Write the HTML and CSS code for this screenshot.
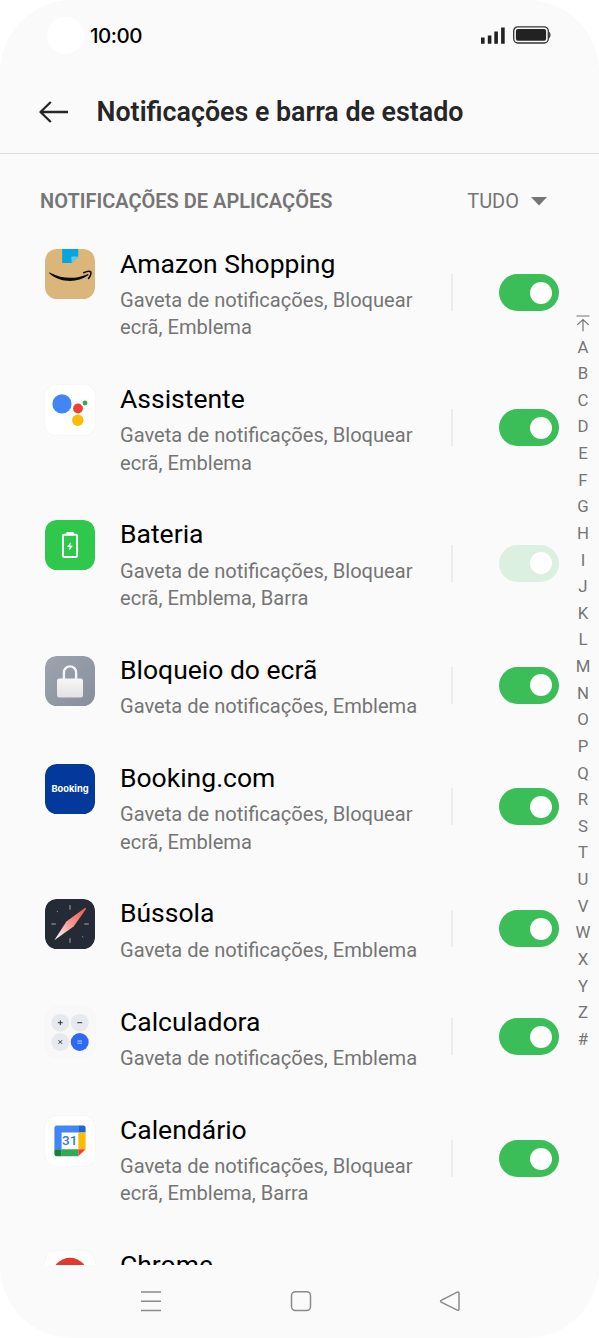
FILE: index.html
```
<!DOCTYPE html>
<html lang="pt">
<head>
    <meta charset="UTF-8">
    <meta name="viewport" content="width=device-width, initial-scale=1.0">
    <title>Notificações e barra de estado</title>

    <link rel="stylesheet" href="styles.css">
</head>

<body>

<div class="screen">
    <div class="status-bar">
        <div class="camera"></div>
        <span class="time">10:00</span>
        <svg class="signal" width="24" height="17" viewBox="0 0 24 17">
            <path d="M0 10.5h3.6v6.3H0zM6.8 8.5h3.6v8.3H6.8zM13.3 4.6h3.6v12.2h-3.6zM20.1.4h3.6v16.4h-3.6z" fill="#222"/>
        </svg>
        <svg class="battery" width="38" height="18" viewBox="0 0 38 18">
            <rect x=".7" y=".8" width="34.6" height="16.2" rx="4.2" fill="none" stroke="#333" stroke-width="1.3"/>
            <rect x="2.9" y="3" width="30.2" height="11.8" rx="2" fill="#222"/>
            <path d="M36.2 5.8c1.7.6 1.7 5.8 0 6.4z" fill="#222"/>
        </svg>
    </div>

    <header class="header">
        <svg class="back" width="30" height="22" viewBox="0 0 30 22">
            <path d="M29 11H1.5M11.800 1L1.500 11l10.300 10" fill="none" stroke="#262626" stroke-width="2.3" stroke-linejoin="round"/>
        </svg>
        <h1>Notificações e barra de estado</h1>
    </header>

    <div class="section-title">
        <h2>NOTIFICAÇÕES DE APLICAÇÕES</h2>
        <span class="filter">TUDO</span>
        <svg width="16" height="9" viewBox="0 0 16 9"><path d="M0 0h16L8 8.6z" fill="#757575"/></svg>
    </div>

    <div class="list">
        <div class="row">
            <svg class="icon" viewBox="0 0 50 50">
                <rect width="50" height="50" rx="11.5" fill="#dab67a"/>
                <path d="M17.2 0h16v7.5l-6.5 6.5h-9.5z" fill="#08a5dc"/>
                <path d="M33.2 7.5h-6.3q-.8 0-.7.8l.5 5.7z" fill="#5fc9ee"/>
                <path d="M4.500 24.600c-.7-.6-.2-1.300.6-.9 12.600 6.500 25.400 6.700 37.300 1.500 1.100-.4 1.600.7.600 1.400-10.500 7.700-28.500 7.300-38.500-2z" fill="#0b0b0b"/>
                <path d="M38.600 23.800c2.800-1.200 6.300-1.700 7.200-.9.700 1-.3 4.300-2.300 6.600" fill="none" stroke="#0b0b0b" stroke-width="1.500" stroke-linecap="round"/>
            </svg>
            <div class="text">
                <div class="name">Amazon Shopping</div>
                <div class="detail">Gaveta de notificações, Bloquear ecrã, Emblema</div>
            </div>
            <div class="toggle"></div>
        </div>

        <div class="row">
            <svg class="icon light" viewBox="0 0 50 50">
                <rect width="50" height="50" rx="11.5" fill="#fff"/>
                <circle cx="17" cy="18.900" r="9.600" fill="#4285f4"/>
                <circle cx="33" cy="23.500" r="4.900" fill="#ea4335"/>
                <circle cx="32.800" cy="35.300" r="5.700" fill="#fbbc04"/>
                <circle cx="40" cy="18" r="2.400" fill="#34a853"/>
            </svg>
            <div class="text">
                <div class="name">Assistente</div>
                <div class="detail">Gaveta de notificações, Bloquear ecrã, Emblema</div>
            </div>
            <div class="toggle"></div>
        </div>

        <div class="row">
            <svg class="icon" viewBox="0 0 50 50">
                <rect width="50" height="50" rx="11.5" fill="#2fc84d"/>
                <rect x="17.900" y="14.800" width="14.200" height="22.200" rx="1.300" fill="none" stroke="#fff" stroke-width="1.900"/>
                <path d="M21.200 14.500v-1.200q0-1.300 1.300-1.300h5q1.300 0 1.300 1.300v1.200z" fill="#fff"/>
                <path d="M25.700 22.300l-3.700 4.600h2.500l-.3 3.700 3.800-4.900h-2.500z" fill="#fff"/>
            </svg>
            <div class="text">
                <div class="name">Bateria</div>
                <div class="detail">Gaveta de notificações, Bloquear ecrã, Emblema, Barra</div>
            </div>
            <div class="toggle disabled"></div>
        </div>

        <div class="row">
            <svg class="icon" viewBox="0 0 50 50">
                <defs>
                    <linearGradient id="lockBody" x1="0" y1="0" x2="0" y2="1">
                        <stop offset="0" stop-color="#f6f6f6"/>
                        <stop offset="1" stop-color="#e2e2e2"/>
                    </linearGradient>
                    <linearGradient id="lockBg" x1="0" y1="0" x2="1" y2="1">
                        <stop offset="0" stop-color="#9da4b0"/>
                        <stop offset="1" stop-color="#878f9c"/>
                    </linearGradient>
                </defs>
                <rect width="50" height="50" rx="11.5" fill="url(#lockBg)"/>
                <path d="M18.900 24v-7.500a6.100 6.100 0 0 1 12.200 0V24" fill="none" stroke="#f4f4f4" stroke-width="2.400"/>
                <rect x="12" y="22.600" width="26" height="19" rx="2.500" fill="url(#lockBody)"/>
            </svg>
            <div class="text">
                <div class="name">Bloqueio do ecrã</div>
                <div class="detail">Gaveta de notificações, Emblema</div>
            </div>
            <div class="toggle"></div>
        </div>

        <div class="row">
            <svg class="icon" viewBox="0 0 50 50">
                <rect width="50" height="50" rx="11.5" fill="#03399b"/>
                <text class="booking" x="25" y="28">Booking</text>
            </svg>
            <div class="text">
                <div class="name">Booking.com</div>
                <div class="detail">Gaveta de notificações, Bloquear ecrã, Emblema</div>
            </div>
            <div class="toggle"></div>
        </div>

        <div class="row">
            <svg class="icon" viewBox="0 0 50 50">
                <defs>
                    <linearGradient id="needle" x1="1" y1="0" x2="0" y2="1">
                        <stop offset="0" stop-color="#ee5350"/>
                        <stop offset=".5" stop-color="#f79b92"/>
                        <stop offset="1" stop-color="#fff"/>
                    </linearGradient>
                </defs>
                <rect width="50" height="50" rx="11.5" fill="#252a37"/>
                <path d="M25 6.200v4.500M25 39.200v4.500M6.300 25h4.500M39.300 25h4.500" stroke="#a4a7ad" stroke-width="1"/>
                <path d="M11.800 12.200l1 .6M37.300 37.600l1 .6" stroke="#a4a7ad" stroke-width="1"/>
                <path d="M40.900 9.100c.3.400.1 1-.2 1.500L28.600 27.600 9.300 41.300 21.400 22.400 39.500 9.300q.9-.6 1.400-.2z" fill="url(#needle)"/>
            </svg>
            <div class="text">
                <div class="name">Bússola</div>
                <div class="detail">Gaveta de notificações, Emblema</div>
            </div>
            <div class="toggle"></div>
        </div>

        <div class="row">
            <svg class="icon light" viewBox="0 0 50 50">
                <rect width="50" height="50" rx="11.5" fill="#f8f8f8"/>
                <circle cx="15.300" cy="15.700" r="9" fill="#e6e9ee"/>
                <circle cx="34.700" cy="15.700" r="9" fill="#e6e9ee"/>
                <circle cx="15.300" cy="35" r="9" fill="#e6e9ee"/>
                <circle cx="34.700" cy="35" r="9" fill="#2e69f5"/>
                <path d="M12.900 15.700h4.800M15.300 13.300v4.800M32.200 15.700h5M13.500 33.200l3.600 3.600M17.100 33.200l-3.600 3.600" stroke="#333" stroke-width="1"/>
                <path d="M32.400 34h4.600M32.400 36.200h4.600" stroke="#b9cdff" stroke-width="1"/>
            </svg>
            <div class="text">
                <div class="name">Calculadora</div>
                <div class="detail">Gaveta de notificações, Emblema</div>
            </div>
            <div class="toggle"></div>
        </div>

        <div class="row">
            <svg class="icon light" viewBox="0 0 50 50">
                <rect width="50" height="50" rx="11.5" fill="#fff"/>
                <path d="M9.400 33.300V12q0-2.500 2.500-2.500h21.500v7H16.600v16.800z" fill="#4285f4"/>
                <path d="M33.300 9.500h4.800q2.500 0 2.500 2.500v4.500h-7.300z" fill="#1967d2"/>
                <path d="M33.300 16.500h7.300v16.800h-7.300z" fill="#fbbc04"/>
                <path d="M16.600 33.300h16.700v7H16.600z" fill="#34a853"/>
                <path d="M9.400 33.300h7.200v7h-4.700q-2.500 0-2.500-2.500z" fill="#188038"/>
                <path d="M33.300 33.300h7.300l-7.300 7z" fill="#ea4335"/>
                <text class="day" x="24.800" y="29.200">31</text>
            </svg>
            <div class="text">
                <div class="name">Calendário</div>
                <div class="detail">Gaveta de notificações, Bloquear ecrã, Emblema, Barra</div>
            </div>
            <div class="toggle"></div>
        </div>

        <div class="row">
            <svg class="icon light" viewBox="0 0 50 50">
                <rect width="50" height="50" rx="11.5" fill="#fff"/>
                <circle cx="25" cy="24.800" r="18" fill="#de3b30"/>
            </svg>
            <div class="text">
                <div class="name">Chrome</div>
            </div>
        </div>
    </div>

    <!-- Alphabet shortcut, floats over the list -->
    <div class="alphabet">
        <svg width="14" height="17" viewBox="0 0 14 17">
            <path d="M.5 1h13M7 16.200V4.800M1.300 9.900L7 4.500l5.700 5.400" fill="none" stroke="#757575" stroke-width="1.200"/>
        </svg>
        <span>A</span><span>B</span><span>C</span><span>D</span><span>E</span><span>F</span><span>G</span>
        <span>H</span><span>I</span><span>J</span><span>K</span><span>L</span><span>M</span><span>N</span>
        <span>O</span><span>P</span><span>Q</span><span>R</span><span>S</span><span>T</span><span>U</span>
        <span>V</span><span>W</span><span>X</span><span>Y</span><span>Z</span><span>#</span>
    </div>

    <nav class="nav-bar">
        <svg width="22" height="22" viewBox="0 0 22 22">
            <path d="M1 1.900h20M1 11.200h20M1 20.400h20"/>
        </svg>
        <svg width="22" height="22" viewBox="0 0 22 22">
            <rect x="1.500" y="1.700" width="19" height="18.900" rx="4"/>
        </svg>
        <svg width="22" height="22" viewBox="0 0 22 22">
            <path d="M2.200 10.300L18.200 2.200q1.800-.6 1.800 1.200v15.500q0 1.800-1.800 1.200L2.200 12.100q-1.300-.9 0-1.800z"/>
        </svg>
    </nav>
</div>

</body>
</html>
```
FILE: styles.css
```
* {
    box-sizing: border-box;
}

body {
    margin: 0;
    background-color: white;
    font-family: Roboto, "Liberation Sans", sans-serif;
}

svg {
    display: block;
    flex-shrink: 0;
}

/* Phone screen with rounded corners */
.screen {
    position: relative;
    display: flex;
    flex-direction: column;
    width: 599px;
    height: 1338px;
    overflow: hidden;
    background-color: #fafafa;
    border-radius: 72px;
}

/* Status bar */
.status-bar {
    display: flex;
    align-items: center;
    height: 70px;
    padding: 0 48px 0 46.5px;
}

.camera {
    width: 37px;
    height: 37px;
    border-radius: 50%;
    background-color: white;
}

.time {
    margin-left: 6.5px;
    padding-top: 1px;
    font-family: Inter, Roboto, sans-serif;
    font-size: 20.5px;
    font-weight: 500;
    letter-spacing: -0.5px;
    color: black;
}

.signal {
    margin-left: auto;
}

.battery {
    margin-left: 8px;
}

/* Title bar */
.header {
    display: flex;
    align-items: center;
    height: 84px;
    padding: 0 0 0 38.5px;
    border-bottom: 1px solid #dcdcdc;
}

.header h1 {
    margin: 0 0 0 28px;
    font-size: 26.8px;
    font-weight: 600;
    color: #262626;
}

/* Section heading and filter */
.section-title {
    display: flex;
    align-items: center;
    height: 70.7px;
    padding: 24px 52px 0 40px;
    color: #757575;
}

.section-title h2 {
    margin: 0;
    font-size: 20px;
    font-weight: 600;
}

.filter {
    margin-left: auto;
    margin-right: 12px;
    font-size: 20px;
}

/* App list, cut off above the navigation bar */
.list {
    height: 1040.3px;
    overflow: hidden;
}

.row {
    display: flex;
    padding: 20px 40px 18.6px 44.5px;
}

.icon {
    width: 50px;
    height: 50px;
    margin-top: 4.7px;
    border-radius: 11.5px;
}

.icon.light {
    box-shadow: 0 0 2px rgba(0, 0, 0, 0.05);
}

.text {
    width: 320px;
    margin-left: 25.5px;
}

.name {
    font-size: 26.5px;
    line-height: 38px;
    color: black;
}

.detail {
    margin-top: 4.4px;
    font-size: 20.1px;
    line-height: 27.2px;
    color: #757575;
}

/* Switch, with the thin divider to its left */
.toggle {
    position: relative;
    align-self: center;
    width: 60px;
    height: 37px;
    margin-left: auto;
    margin-bottom: 1px;
    border-radius: 19px;
    background-color: #3bbd58;
}

.toggle::before {
    content: "";
    position: absolute;
    left: -48px;
    width: 2px;
    height: 37px;
    background-color: #ececec;
}

.toggle::after {
    content: "";
    position: absolute;
    top: 7.5px;
    right: 7px;
    width: 22px;
    height: 22px;
    border-radius: 50%;
    background-color: white;
}

.toggle.disabled {
    background-color: #dcf0e2;
}

.booking {
    font-family: Inter, sans-serif;
    font-size: 9.3px;
    font-weight: 700;
    text-anchor: middle;
    fill: white;
}

.day {
    font-size: 13.5px;
    font-weight: 500;
    text-anchor: middle;
    fill: #3478e5;
}

.alphabet {
    position: absolute;
    top: 314.5px;
    right: 0;
    display: flex;
    flex-direction: column;
    align-items: center;
    width: 32px;
    font-size: 16.8px;
    line-height: 26.62px;
    color: #757575;
}

.alphabet svg {
    margin-bottom: 2px;
}

/* System navigation */
.nav-bar {
    display: flex;
    justify-content: space-between;
    padding: 25px 138px 0 140px;
    fill: none;
    stroke: #8a8a8a;
    stroke-width: 1.5;
}
```
